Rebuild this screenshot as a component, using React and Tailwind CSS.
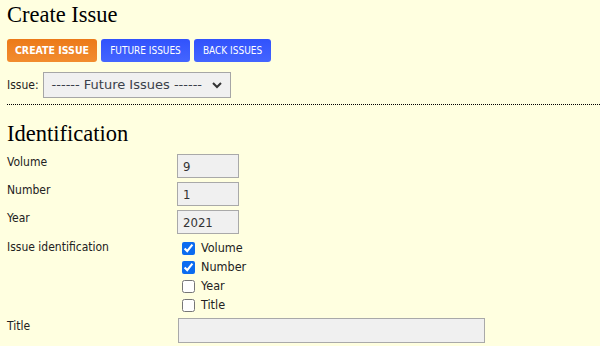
import React from 'react';

const labelFont = { fontFamily: '"DejaVu Sans Condensed", "DejaVu Sans", sans-serif' };

const Field = ({ label, value, width = 'w-[62px]' }) => (
  <div className="flex items-start h-[28px]">
    <div className="w-[170px] -mt-[1px] text-[12px] text-[#222]">{label}</div>
    <input
      readOnly
      value={value}
      className={`${width} h-[24px] bg-[#f0f0f0] border border-[#a9a9a9] px-[5px] text-[13px] text-[#333] outline-none`}
    />
  </div>
);

const Check = ({ label, checked }) => (
  <label className="flex items-center h-[19px] gap-[6px] text-[12.5px] text-[#222]">
    <input type="checkbox" defaultChecked={checked} className="w-[13px] h-[13px] m-0 accent-[#0b6cf0]" />
    {label}
  </label>
);

export default function App() {
  return (
    <div className="min-h-[346px] w-[600px] bg-[#ffffe0] pl-[7px] overflow-hidden" style={labelFont}>
      <h1 className="text-[22.5px] leading-[28px] pt-[1px] text-black" style={{ fontFamily: '"Liberation Serif", serif' }}>
        Create Issue
      </h1>
      <div className="flex gap-[4px] mt-[10px]">
        <button className="h-[23px] w-[90px] rounded-[3px] bg-gradient-to-b from-[#ec7a18] to-[#f28c2e] text-white text-[10.5px] font-bold">
          CREATE ISSUE
        </button>
        <button className="h-[23px] w-[89px] rounded-[3px] bg-gradient-to-b from-[#3152fc] to-[#4465ff] text-white text-[10px]">
          FUTURE ISSUES
        </button>
        <button className="h-[23px] w-[77px] rounded-[3px] bg-gradient-to-b from-[#3152fc] to-[#4465ff] text-white text-[10px]">
          BACK ISSUES
        </button>
      </div>
      <div className="flex items-center gap-[4px] mt-[10px] text-[12px] text-[#222]">
        <span>Issue:</span>
        <div
          className="relative w-[188px] h-[26px] bg-[#f0f0f0] border border-[#a6a6a6] flex items-center pl-[8px] text-[13px] text-[#3a3f4a]"
          style={{ fontFamily: '"DejaVu Sans", sans-serif' }}
        >
          ------ Future Issues ------
          <svg className="absolute right-[8px] top-[9px]" width="10" height="7" viewBox="0 0 10 7">
            <path d="M1 1 L5 5 L9 1" stroke="#333" strokeWidth="2" fill="none" />
          </svg>
        </div>
      </div>
      <div className="mt-[6px] border-t border-dotted border-black" />
      <h2 className="text-[22.5px] leading-[28px] mt-[15px] text-black" style={{ fontFamily: '"Liberation Serif", serif' }}>
        Identification
      </h2>
      <div className="mt-[6px]">
        <Field label="Volume" value="9" />
        <Field label="Number" value="1" />
        <Field label="Year" value="2021" />
        <div className="flex items-start mt-[1px]">
          <div className="w-[175px] -mt-[1px] text-[12px] text-[#222]">Issue identification</div>
          <div className="flex flex-col">
            <Check label="Volume" checked />
            <Check label="Number" checked />
            <Check label="Year" />
            <Check label="Title" />
          </div>
        </div>
        <div className="flex items-start mt-[3px]">
          <div className="w-[171px] -mt-[1px] text-[12px] text-[#222]">Title</div>
          <div className="w-[307px] h-[25px] bg-[#f0f0f0] border border-[#a9a9a9]" />
        </div>
      </div>
    </div>
  );
}
